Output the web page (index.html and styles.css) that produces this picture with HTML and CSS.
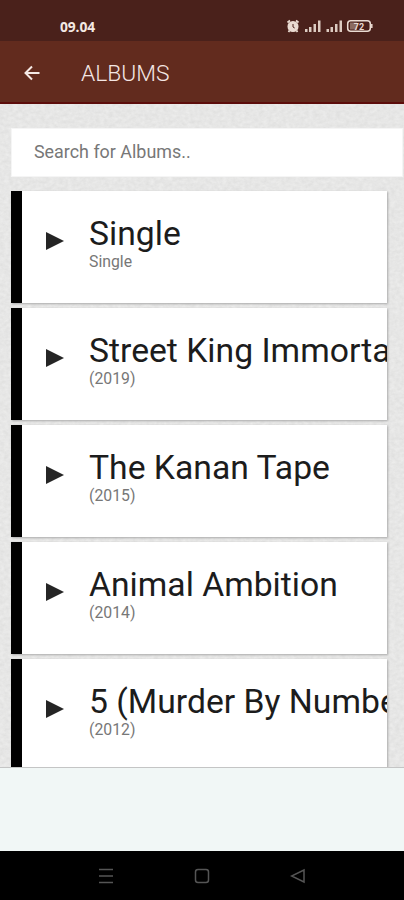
FILE: index.html
```html
<!DOCTYPE html>
<html lang="en">
<head>
<meta charset="utf-8">
<title>Albums</title>
<link rel="stylesheet" href="styles.css">
</head>
<body>
<div class="phone">
  <header class="status">
    <span class="clock">09.04</span>
    <svg class="indicators" width="88" height="16" viewBox="0 0 88 16">
      <g fill="none" stroke="#eadbd2">
        <circle cx="7" cy="8.500" r="4.800" fill="#eadbd2" stroke-width="1.500"/>
        <path d="M1.500 4.500l2.500-2M12.500 4.500L10 2.500M3.500 12.500l-1 1.500M10.500 12.500l1 1.500" stroke-width="1.800"/>
        <path d="M7 6v3l1.700 1" stroke="#4a211b" stroke-width="1"/>
        <rect x="61.700" y="2.700" width="22.600" height="10.600" rx="3" stroke-width="1.500"/>
        <path d="M85.800 6v4" stroke-width="1.500"/>
      </g>
      <path d="M64 4.500h7v7h-7z" fill="#8b6b61"/>
      <path d="M19 11h2.500v3H19zM23 9h2.500v5H23zM27.500 6H30v8h-2.500zM32 2.500h2.500V14H32zM40.500 11H43v3h-2.500zM44.500 9H47v5h-2.500zM49 6h2.500v8H49zM53.500 2.500H56V14h-2.500z" fill="#dccbc1"/>
      <text class="charge" x="73" y="11.500" text-anchor="middle">72</text>
    </svg>
  </header>
  <div class="toolbar">
    <svg class="back" width="16" height="16" viewBox="0 0 16 16"><path d="M15.500 8H1.500M8 1.500L1.500 8L8 14.500" fill="none" stroke="#f5e9e5" stroke-width="2"/></svg>
    <h1>ALBUMS</h1>
  </div>
  <main class="content">
    <svg class="paper" width="404" height="664">
      <filter id="grain" x="0" y="0" width="100%" height="100%" color-interpolation-filters="sRGB">
        <feTurbulence type="fractalNoise" baseFrequency="0.22 0.3" numOctaves="3" seed="4"/>
        <feColorMatrix values="0.07 0 0 0 0.868  0.07 0 0 0 0.868  0.07 0 0 0 0.865  0 0 0 0 1"/>
      </filter>
      <rect width="404" height="664" filter="url(#grain)"/>
    </svg>
    <input class="search" type="text" placeholder="Search for Albums.." aria-label="Search for Albums">
    <ul class="albums">
      <li class="card"><svg class="play" width="18" height="18" viewBox="0 0 18 18"><path d="M0 0L18 9L0 18Z"/></svg><div class="info"><h2>Single</h2><p>Single</p></div></li>
      <li class="card"><svg class="play" width="18" height="18" viewBox="0 0 18 18"><path d="M0 0L18 9L0 18Z"/></svg><div class="info"><h2>Street King Immortal</h2><p>(2019)</p></div></li>
      <li class="card"><svg class="play" width="18" height="18" viewBox="0 0 18 18"><path d="M0 0L18 9L0 18Z"/></svg><div class="info"><h2>The Kanan Tape</h2><p>(2015)</p></div></li>
      <li class="card"><svg class="play" width="18" height="18" viewBox="0 0 18 18"><path d="M0 0L18 9L0 18Z"/></svg><div class="info"><h2>Animal Ambition</h2><p>(2014)</p></div></li>
      <li class="card"><svg class="play" width="18" height="18" viewBox="0 0 18 18"><path d="M0 0L18 9L0 18Z"/></svg><div class="info"><h2>5 (Murder By Numbers)</h2><p>(2012)</p></div></li>
    </ul>
  </main>
  <div class="banner"></div>
  <nav class="nav">
    <svg width="16" height="16" viewBox="0 0 16 16"><path d="M1 1.500h14M1 8h14M1 14.500h14"/></svg>
    <svg width="16" height="16" viewBox="0 0 16 16"><rect x="1.500" y="1.500" width="13" height="13" rx="2.500"/></svg>
    <svg width="16" height="16" viewBox="0 0 16 16"><path d="M14 2v12L1.500 8Z"/></svg>
  </nav>
</div>
</body>
</html>
```
FILE: styles.css
```css
* { box-sizing: border-box; margin: 0; padding: 0; }
body { font-family: Roboto, "Liberation Sans", sans-serif; background: #000; }
.phone { width: 404px; height: 900px; display: flex; flex-direction: column; overflow: hidden; }
.status {
  height: 41px; flex: none; display: flex; align-items: flex-start; justify-content: space-between;
  padding: 18px 30px 0 60px; background: #4a211b; color: #f4e9e3;
}
.clock { font: 700 13.8px/17px "Open Sans", sans-serif; letter-spacing: -0.1px; }
.charge { font: 700 9px Roboto, sans-serif; fill: #eadbd2; }
.toolbar {
  height: 63px; flex: none; display: flex; align-items: center; padding: 3px 0 0 24px;
  background: #622b1e; border-bottom: 2px solid #5c0d0b;
}
.back { margin-right: 41px; }
h1 { margin-top: 1px; font-size: 22.8px; font-weight: 300; line-height: 28px; color: #f4e6e4; }
.content {
  position: relative; height: 664px; flex: none; overflow: hidden; padding: 24px 0 0 11px;
  background: #e5e5e4; border-bottom: 1px solid #c4c5c5;
}
.paper { position: absolute; left: 0; top: 0; }
.search {
  position: relative; display: block; width: 392px; height: 49px; padding: 0 22px 2px;
  border: 1px solid #f5f5f5; border-radius: 0; background: #fff; font: 400 17.9px Roboto, sans-serif;
}
.search::placeholder { color: #777; opacity: 1; }
.albums { position: relative; list-style: none; width: 376px; margin-top: 14px; display: flex; flex-direction: column; gap: 5px; }
.card {
  height: 112px; flex: none; display: flex; align-items: flex-start; overflow: hidden;
  padding: 21px 0 0 24px; border-left: 11px solid #000; background: #fff;
  box-shadow: 1px 1px 2px #aaa;
}
.play { flex: none; margin: 20px 25px 0 0; fill: #252525; }
h2 { margin: 1px 0 -1px; font-size: 33.7px; font-weight: 400; line-height: 42px; white-space: nowrap; color: #1c1c1c; }
.info p { font-size: 15.8px; line-height: 16px; color: #777; }
.banner { height: 83px; flex: none; background: #f1f7f6; }
.nav { height: 49px; flex: none; display: flex; align-items: center; gap: 80px; padding-left: 98px; background: #000; }
.nav svg { fill: none; stroke: #555; stroke-width: 1.5; }
```
